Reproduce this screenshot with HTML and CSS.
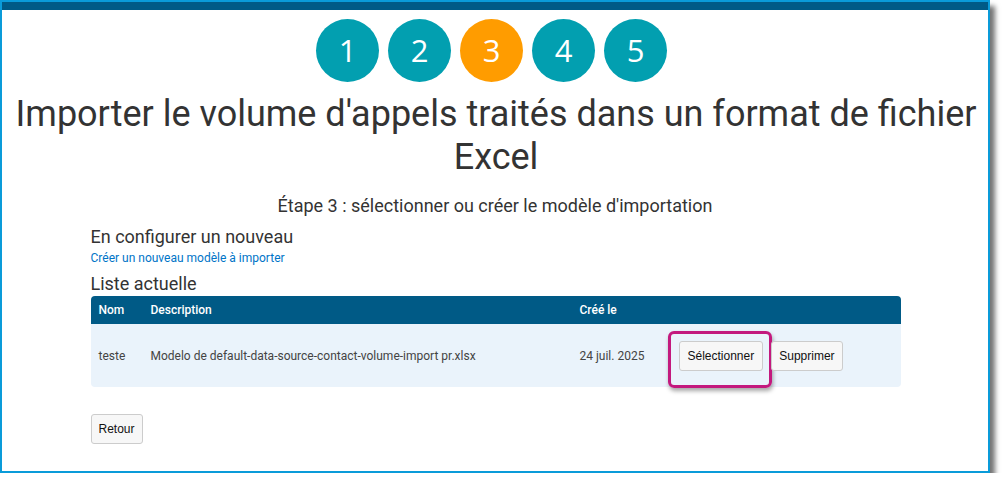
FILE: index.html
```html
<!DOCTYPE html>
<html lang="fr">
<head>
<meta charset="utf-8">
<title>Importer</title>
<link rel="stylesheet" href="styles.css">
</head>
<body>
<div class="frame">
  <div class="topbar"></div>
  <div class="steps">
    <span class="step">1</span>
    <span class="step">2</span>
    <span class="step active">3</span>
    <span class="step">4</span>
    <span class="step">5</span>
  </div>
  <h1 class="title">Importer le volume d'appels traités dans un format de fichier Excel</h1>
  <p class="subtitle">Étape 3 : sélectionner ou créer le modèle d'importation</p>
  <div class="content">
    <h2 class="section">En configurer un nouveau</h2>
    <a class="link" href="#">Créer un nouveau modèle à importer</a>
    <h2 class="section list-title">Liste actuelle</h2>
    <table class="grid">
      <thead>
        <tr>
          <th class="c-name">Nom</th>
          <th class="c-desc">Description</th>
          <th class="c-date">Créé le</th>
          <th class="c-act"></th>
        </tr>
      </thead>
      <tbody>
        <tr>
          <td class="c-name">teste</td>
          <td class="c-desc">Modelo de default-data-source-contact-volume-import pr.xlsx</td>
          <td class="c-date">24 juil. 2025</td>
          <td class="c-act">
            <div class="actions">
              <span class="highlight"><button class="btn">Sélectionner</button></span>
              <button class="btn delete">Supprimer</button>
            </div>
          </td>
        </tr>
      </tbody>
    </table>
    <button class="btn back">Retour</button>
  </div>
</div>
</body>
</html>
```

FILE: styles.css
```css
html, body {
  margin: 0;
  padding: 0;
  background: #ffffff;
}
body {
  font-family: Roboto, "Liberation Sans", sans-serif;
  color: #333333;
}
.frame {
  box-sizing: border-box;
  width: 990px;
  height: 473px;
  border: 2px solid #0a9bd9;
  background: #ffffff;
  box-shadow: 5px 6px 5px rgba(0, 0, 0, 0.55);
}
.topbar {
  height: 8px;
  background: #005a86;
}
.steps {
  display: flex;
  justify-content: center;
  gap: 9px;
  margin-top: 9px;
  padding-right: 7px;
}
.step {
  width: 63px;
  height: 63px;
  border-radius: 50%;
  background: #029fb0;
  color: #ffffff;
  font-family: "Open Sans", sans-serif;
  font-size: 31px;
  line-height: 63px;
  text-align: center;
}
.step.active {
  background: #ff9c00;
}
.title {
  margin: 11px 0 0;
  font-size: 36px;
  font-weight: 400;
  line-height: 43px;
  text-align: center;
  color: #333333;
  padding-left: 2px;
}
.subtitle {
  margin: 16px 0 0;
  font-size: 18px;
  line-height: 22px;
  text-align: center;
  color: #333333;
}
.content {
  width: 810px;
  margin: 0 auto;
  padding-left: 1px;
}
.section {
  margin: 9px 0 0;
  font-size: 18px;
  font-weight: 400;
  line-height: 22px;
  color: #333333;
}
.link {
  display: block;
  margin-top: 2px;
  font-size: 12px;
  line-height: 16px;
  color: #0074c7;
  text-decoration: none;
}
.list-title {
  margin: 7px 0 1px;
}
.grid {
  width: 100%;
  border-collapse: separate;
  border-spacing: 0;
  font-size: 12px;
}
.grid th {
  background: #005a86;
  color: #ffffff;
  font-weight: 500;
  text-align: left;
  height: 28px;
  padding: 0 8px;
}
.grid th:first-child { border-top-left-radius: 4px; }
.grid th:last-child { border-top-right-radius: 4px; }
.grid td {
  background: #eaf3fb;
  color: #444444;
  height: 63px;
  padding: 0 8px;
}
.grid tbody td:first-child { border-bottom-left-radius: 4px; }
.grid tbody td:last-child { border-bottom-right-radius: 4px; }
.c-name { width: 36px; }
.c-desc { width: 413px; }
.c-date { width: 72px; }
.grid td.c-act {
  vertical-align: top;
  padding: 0 8px;
}
.actions {
  display: flex;
  align-items: flex-start;
}
.highlight {
  display: inline-block;
  padding: 7px 6px 14px 8px;
  margin: 7px 0 -8px;
  border: 3px solid #c3197e;
  border-radius: 6px;
  box-shadow: 1px 3px 4px rgba(0, 0, 0, 0.35);
}
.btn {
  font-family: "Liberation Sans", Arial, sans-serif;
  font-size: 12px;
  color: #111111;
  background: #f7f7f7;
  border: 1px solid #cccccc;
  border-radius: 3px;
  height: 30px;
  padding: 0 8px;
  cursor: pointer;
}
.btn.delete {
  margin: 17px 0 0 -1px;
  padding: 0 7px;
}
.back {
  display: block;
  margin-top: 27px;
  padding: 0 7px;
}
```
